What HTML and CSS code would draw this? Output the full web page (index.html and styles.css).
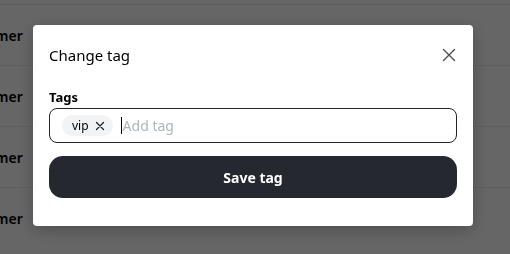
FILE: index.html
```html
<!DOCTYPE html>
<html lang="en">
<head>
    <meta charset="UTF-8">
    <meta name="viewport" content="width=device-width, initial-scale=1.0">
    <title>Change tag</title>
    <link rel="stylesheet" href="styles.css">
</head>
<body>
    <!-- Table behind the modal -->
    <div class="table">
        <div class="row"><span class="cell">Customer</span></div>
        <div class="row"><span class="cell">Customer</span></div>
        <div class="row"><span class="cell">Customer</span></div>
        <div class="row"><span class="cell">Customer</span></div>
    </div>

    <div class="overlay">
        <div class="modal">
            <div class="modal-header">
                <h2 class="modal-title">Change tag</h2>
                <button class="close-btn" aria-label="Close">
                    <svg width="16" height="16" viewBox="0 0 16 16" fill="none" stroke="#495057" stroke-width="1.4" stroke-linecap="round">
                        <path d="M2.5 2.5 L13.5 13.5 M13.5 2.5 L2.5 13.5"/>
                    </svg>
                </button>
            </div>
            <label class="field-label">Tags</label>
            <div class="tag-input">
                <span class="chip">vip
                    <svg width="10" height="10" viewBox="0 0 10 10" fill="none" stroke="#212529" stroke-width="1.3" stroke-linecap="round">
                        <path d="M1.5 1.5 L8.5 8.5 M8.5 1.5 L1.5 8.5"/>
                    </svg>
                </span>
                <span class="caret"></span>
                <span class="placeholder">Add tag</span>
            </div>
            <button class="save-btn">Save tag</button>
        </div>
    </div>
</body>
</html>
```

FILE: styles.css
```css
body {
    margin: 0;
    font-family: "Noto Sans", "Open Sans", sans-serif;
    background: #fff;
    color: #000;
    overflow: hidden;
}
.table {
    padding-top: 4px;
}
.row {
    height: 60px;
    border-top: 1px solid #e9ecef;
    display: flex;
    align-items: center;
}
.cell {
    margin-left: -44px;
    font-size: 14px;
    font-weight: 600;
}
.overlay {
    position: fixed;
    inset: 0;
    background: rgba(0, 0, 0, 0.6);
    display: flex;
    justify-content: center;
    align-items: flex-start;
    padding: 25px 4px 0 0;
}
.modal {
    width: 408px;
    background: #fff;
    border-radius: 4px;
    padding: 16px 16px 28px;
    box-shadow: 0 4px 16px rgba(0, 0, 0, 0.25);
}
.modal-header {
    display: flex;
    justify-content: space-between;
    align-items: center;
    height: 28px;
    margin-bottom: 20px;
}
.modal-title {
    margin: 0;
    font-size: 15px;
    font-weight: 400;
    color: #000;
}
.close-btn {
    border: none;
    background: none;
    padding: 0;
    width: 16px;
    height: 16px;
}
.field-label {
    display: block;
    font-size: 13px;
    font-weight: 700;
    line-height: 16px;
    margin-bottom: 3px;
}
.tag-input {
    height: 33px;
    border: 1px solid #212529;
    border-radius: 8px;
    display: flex;
    align-items: center;
    padding-left: 12px;
}
.chip {
    display: inline-flex;
    align-items: center;
    gap: 6px;
    height: 21px;
    padding: 0 8px 0 10px;
    background: #f1f3f5;
    border-radius: 11px;
    font-size: 12px;
    color: #000;
}
.caret {
    width: 1px;
    height: 17px;
    background: #000;
    margin-left: 8px;
}
.placeholder {
    font-size: 14px;
    color: #adb5bd;
    margin-left: 1px;
}
.save-btn {
    display: block;
    width: 100%;
    height: 42px;
    margin-top: 13px;
    border: none;
    border-radius: 14px;
    background: #25292f;
    color: #fff;
    font-family: inherit;
    font-size: 14px;
    font-weight: 700;
}
```
